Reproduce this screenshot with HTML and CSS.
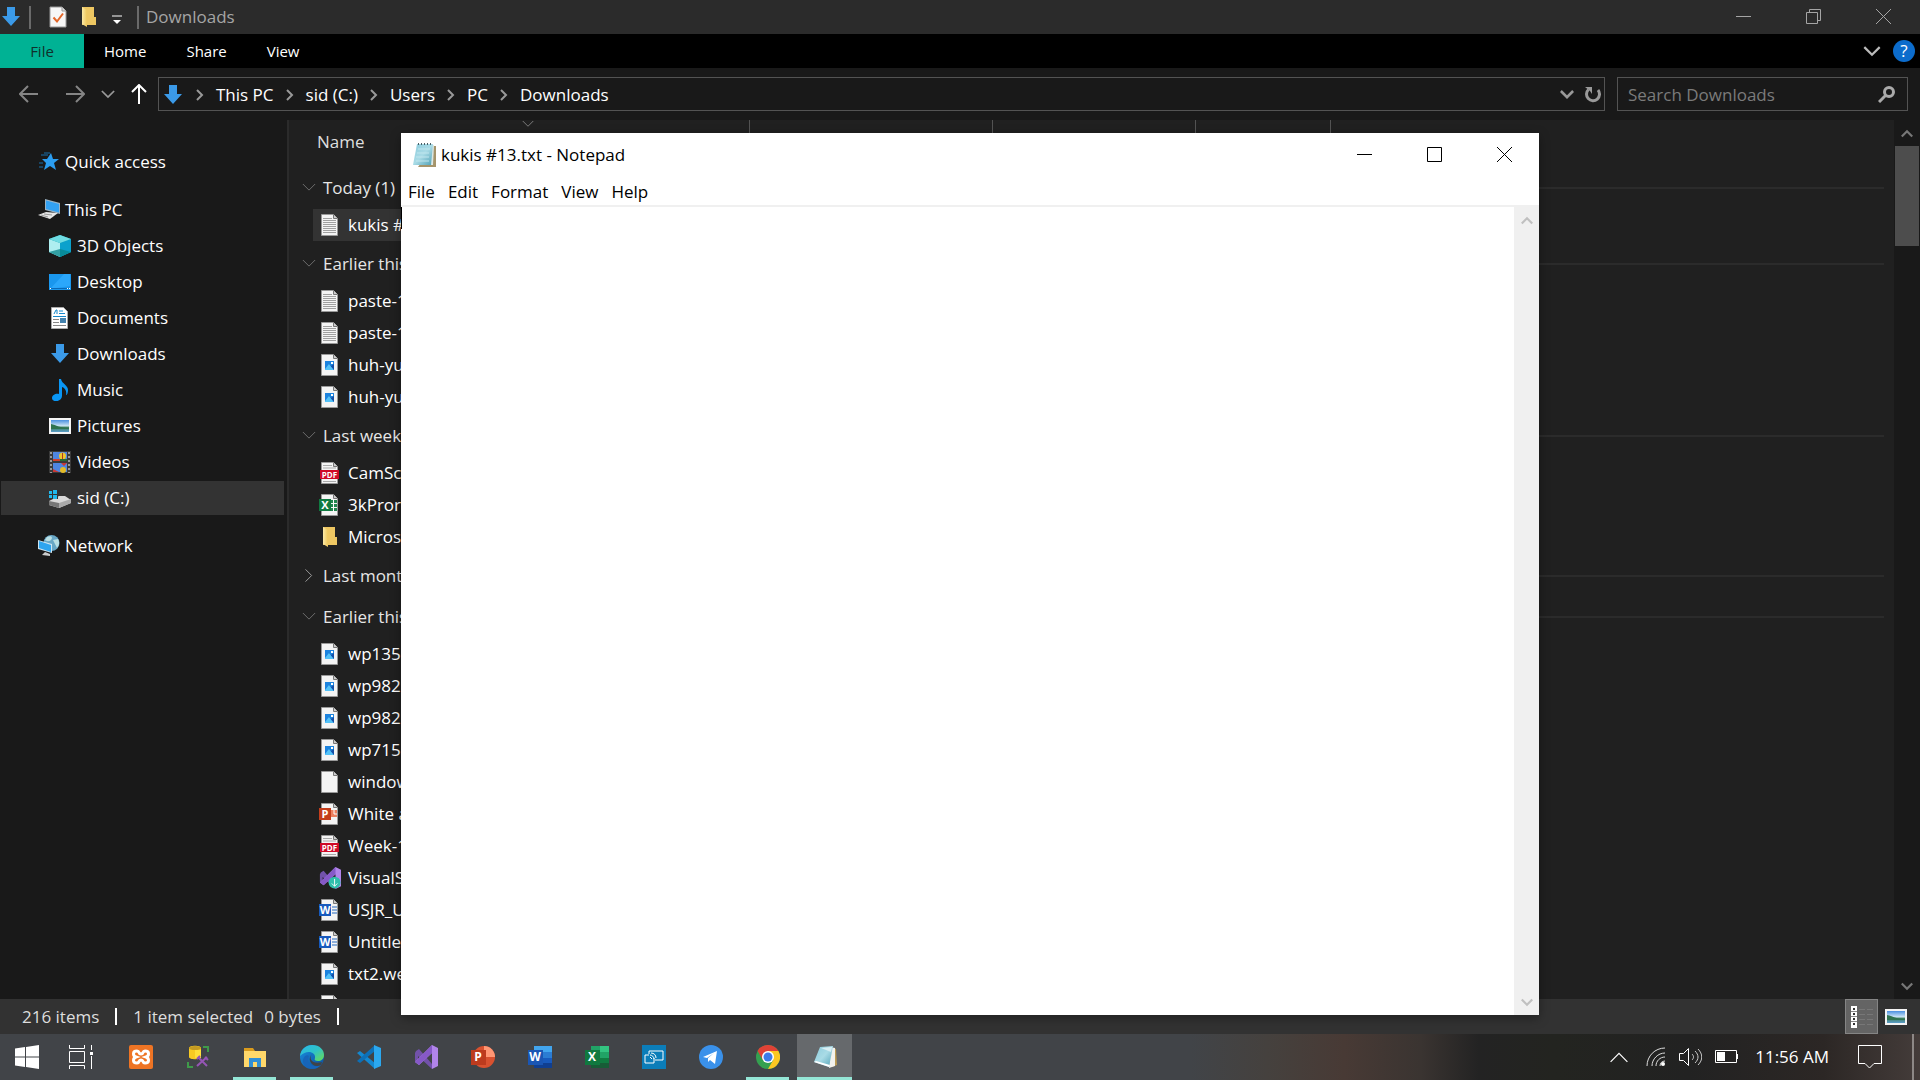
FILE: index.html
```html
<!DOCTYPE html>
<html lang="en">
<head>
<meta charset="utf-8">
<title>Downloads</title>
<link rel="stylesheet" href="styles.css">
</head>
<body>
<svg class="defs" aria-hidden="true">
  <defs>
    <linearGradient id="g-sky" x1="0" y1="0" x2="0" y2="1"><stop offset="0" stop-color="#4a90e0"/><stop offset=".5" stop-color="#cfe6f5"/><stop offset=".6" stop-color="#3c7d5a"/><stop offset="1" stop-color="#5c9ecb"/></linearGradient>
    <linearGradient id="g-pad" x1="0" y1="0" x2="1" y2="1"><stop offset="0" stop-color="#8ccbdc"/><stop offset=".5" stop-color="#a9dbe6"/><stop offset="1" stop-color="#4fa0b5"/></linearGradient>
    <linearGradient id="g-folder" x1="0" y1="0" x2="1" y2="0"><stop offset="0" stop-color="#fbe9a6"/><stop offset="1" stop-color="#eec75b"/></linearGradient>
    <linearGradient id="g-edge" x1="0" y1="0" x2="1" y2="1"><stop offset="0" stop-color="#2ab7e8"/><stop offset=".5" stop-color="#2fc2c8"/><stop offset="1" stop-color="#6cdd4e"/></linearGradient>
    <linearGradient id="g-edge2" x1="0" y1="0" x2="1" y2="1"><stop offset="0" stop-color="#1a8fe0"/><stop offset="1" stop-color="#0c4f9c"/></linearGradient>
  </defs>
  <symbol id="down" viewBox="0 0 22 22"><path d="M7 1h8v9h5l-9 10-9-10h5z" fill="#3b9ae8"/></symbol>
  <symbol id="check" viewBox="0 0 22 22"><path d="M3 1h12l4 4v16H3z" fill="#f7f7f7" stroke="#999"/><path d="M15 1v4h4" fill="#ddd" stroke="#999"/><path d="M6.500 11.500l3.500 4 6-8" fill="none" stroke="#e3672a" stroke-width="2"/></symbol>
  <symbol id="folder" viewBox="0 0 22 22"><path d="M4 1h12v10h2v8H4z" fill="#eec762"/><path d="M4 1l5 3v17l-5-3z" fill="url(#g-folder)"/></symbol>
  <symbol id="star" viewBox="0 0 22 22"><path d="M13 2l2 6h6l-5 4 2 7-6-4-6 4 2-7-4-4h5z" fill="#2b9df0"/><path d="M3 4h7M1 12h4M1 16h4M6 2h6" stroke="#1970ad"/></symbol>
  <symbol id="pc" viewBox="0 0 22 22"><path d="M7 0l15 4v11L7 11z" fill="#9cb3c4"/><path d="M8 1.500l13 3.500v8.500L8 10z" fill="#33a1f2"/><path d="M0 16l8-3 12 1-8 6z" fill="#e6e6e6"/><path d="M3 16l7 2M6 15l8 1" stroke="#999"/></symbol>
  <symbol id="cube" viewBox="0 0 22 22"><path d="M11 0l11 4v13l-11 5-11-5V4z" fill="#14a3ad"/><path d="M0 4l11 4v14L0 17z" fill="#aeeef0"/><path d="M11 8l11-4v13l-11 5z" fill="#0ba1cc"/><path d="M11 0l11 4-11 4L0 4z" fill="#6fdce3"/><path d="M11 14l11 3-11 5-11-5z" fill="#08848a" opacity=".75"/></symbol>
  <symbol id="desktop" viewBox="0 0 22 22"><path d="M0 3h22v16H0z" fill="#1a97ee"/><path d="M1 18L15 3h6v12z" fill="#2ba7fb"/><path d="M1 17.500h20" stroke="#0a68b5"/><path d="M1 17.500h1M18 17.500h1M20 17.500h1" stroke="#fff"/></symbol>
  <symbol id="docs" viewBox="0 0 22 22"><path d="M2.500.500h12l4 4v17h-16z" fill="#fff" stroke="#aaa"/><path d="M5 7l2-4h1v4M10 4h4M10 6.500h6M4 9.500h13" stroke="#1689cc" fill="none"/><path d="M4 12.500h6M4 15.500h6M4 18.500h13" stroke="#888"/><path d="M11 11h6v5h-6z" fill="#4382ae"/></symbol>
  <symbol id="music" viewBox="0 0 22 22"><path d="M10 0h2c1 5 7 6 7 11 0 3-1 5-2 5 1-4-1-7-4-8v9c0 6-10 7-10 2 0-3 4-5 7-4z" fill="#0996f5"/></symbol>
  <symbol id="pics" viewBox="0 0 22 22"><path d="M0 3h22v16H0z" fill="#f4f4f4"/><path d="M2 5h18v12H2z" fill="url(#g-sky)"/><path d="M2 9c5 1 9 4 18 4v1H2z" fill="#2f7350"/></symbol>
  <symbol id="video" viewBox="0 0 22 22"><path d="M0 0h22v22H0z" fill="#3a3a3a"/><path d="M2 1v21M20 1v21" stroke="#999" stroke-width="2" stroke-dasharray="2 2"/><path d="M4 1h14v9H4zM4 12h14v9H4z" fill="#4f86e0"/><circle cx="13.500" cy="5" r="3.500" fill="#ecc52e"/><path d="M4 8h6l8 2H4z" fill="#d43f2a"/><path d="M11 8h7v2h-7z" fill="#276b31"/><circle cx="14" cy="19" r="3" fill="#e3bb28"/><path d="M12 12h6l-3 3zM4 18l6 3H4z" fill="#cc3833"/><path d="M13 2h1v6h-1z" fill="#b13b1d"/></symbol>
  <symbol id="drive" viewBox="0 0 22 22"><path d="M0 14l10-5h6l6 4v3l-12 5L0 18z" fill="#d9d9d9"/><path d="M0 14l10 2v5L0 18z" fill="#777"/><path d="M10 16l12-4v4l-12 5z" fill="#aaa"/><path d="M0 3h9v9H0z" fill="#333"/><path d="M0 4h3v3H0zM4 3h4v4H4zM0 8h3v3H0zM4 8h4v4H4z" fill="#21b9ed"/></symbol>
  <symbol id="net" viewBox="0 0 22 22"><circle cx="13.500" cy="8" r="8" fill="#68a7c6"/><path d="M9 2c5-2 6 1 4 3s-5 1-6 0zM15 5l5-1c2 4 1 6-1 9z" fill="#b9dfe4"/><path d="M0 5l14 4v9L0 14z" fill="#cfe6f2"/><path d="M1 6l12 4v7L1 13z" fill="#2fa5ef"/><path d="M7 17l5 2v2l-8-1z" fill="#ccc"/></symbol>
  <symbol id="page" viewBox="0 0 22 22"><path d="M2.500.500h12l4 4v17h-16z" fill="#f4f4f4" stroke="#999"/><path d="M14.500.500v4h4" fill="#ccc" stroke="#777"/></symbol>
  <symbol id="text" viewBox="0 0 22 22"><use href="#page"/><path d="M4 4.500h9M4 6.500h13M4 8.500h13M4 10.500h13M4 12.500h13M4 14.500h13M4 16.500h13M4 18.500h13" stroke="#a0a0a0"/></symbol>
  <symbol id="image" viewBox="0 0 22 22"><use href="#page"/><path d="M6 7h9v9H6z" fill="#1c83de"/><path d="M6 15l4-5 5 6H6z" fill="#54c2f7"/><path d="M10 10l2 2 3-2v6z" fill="#164ea5"/><path d="M12 8h2v2h-2z" fill="#fff"/></symbol>
  <symbol id="pdf" viewBox="0 0 22 22"><use href="#page"/><path d="M4 3.500h9M4 6h13M4 19.500h13" stroke="#aaa"/><path d="M1 8h19v9H1z" fill="#cf0a27"/></symbol>
  <symbol id="xlsf" viewBox="0 0 22 22"><use href="#page"/><path d="M12 6h6v3h-6zM12 10h6v3h-6zM12 14h6v3h-6z" fill="#21854d"/><path d="M14.500 5v13" stroke="#fff"/><path d="M0 5h12v12H0z" fill="#107a41"/></symbol>
  <symbol id="pptf" viewBox="0 0 22 22"><use href="#page"/><path d="M12 7h6v7h-6z" fill="#ec805f"/><path d="M15 7v4h3" stroke="#fff" fill="none"/><path d="M0 5h12v12H0z" fill="#c43e1c"/></symbol>
  <symbol id="docf" viewBox="0 0 22 22"><use href="#page"/><path d="M13 8h5M13 11h5M13 14h5" stroke="#2468c0"/><path d="M0 5h12v12H0z" fill="#185abd"/></symbol>
  <symbol id="vs" viewBox="0 0 24 24"><path d="M2 6l3-2 13 15v5L4 11v7l-3-2V8z" fill="#7252aa"/><path d="M18 0l6 3v18l-6 3V8L5 20l-4-3z" fill="#b184ea"/><path d="M18 0v8L5 20l-4-3z" fill="#8659c8"/></symbol>
  <symbol id="vsdl" viewBox="0 0 24 24"><use href="#vs"/><circle cx="17" cy="17" r="6.500" fill="#30bfac"/><path d="M17 13v8M14 18l3 3 3-3" stroke="#fff" fill="none"/></symbol>
  <symbol id="notepad" viewBox="0 0 24 26"><path d="M21 4h3v21H6z" fill="#a5946b"/><path d="M5 3h17l-1 20H4z" fill="#dce8e4"/><path d="M5 2h16l-2 21H1z" fill="url(#g-pad)"/><path d="M6 7h12M5 11h12M4 15h13M4 19h13" stroke="#c0e6ee"/><path d="M6 2h15" stroke="#4a5f66" stroke-width="2" stroke-dasharray="1 2"/></symbol>
  <symbol id="notetask" viewBox="0 0 24 24"><path d="M20 3l3 1 1 16-5 2z" fill="#bb9b55"/><path d="M17 2l5 1v18l-6 2z" fill="#f2f2ee"/><path d="M7 2l13-1-4 21-15-5z" fill="url(#g-pad)"/><path d="M8 3l11-1-1 5z" fill="#d9eef3"/><path d="M1 17l15 5 1-2-14-4z" fill="#fff"/></symbol>
  <symbol id="chev" viewBox="0 0 16 10"><path d="M1 1l7 7 7-7" fill="none" stroke="currentColor" stroke-width="var(--w,1)"/></symbol>
  <symbol id="crumb" viewBox="0 0 8 12"><path d="M1 1l5 5-5 5" fill="none" stroke="#999" stroke-width="2"/></symbol>
  <symbol id="min" viewBox="0 0 15 15"><path d="M0 7.500h15" stroke="currentColor"/></symbol>
  <symbol id="close" viewBox="0 0 15 15"><path d="M0 0l15 15M15 0L0 15" stroke="currentColor"/></symbol>
  <symbol id="max" viewBox="0 0 15 15"><path d="M.500.500h14v14H.500z" fill="none" stroke="currentColor"/></symbol>
  <symbol id="restore" viewBox="0 0 15 15"><path d="M.500 3.500h11v11H.500zM3.500 3.500v-3h11v11h-3" fill="none" stroke="currentColor"/></symbol>
</svg>

<div class="desktop">
  <main class="explorer">
    <header class="titlebar">
      <svg class="i22"><use href="#down"/></svg>
      <span class="tsep"></span>
      <button class="bare" aria-label="Properties"><svg class="i22"><use href="#check"/></svg></button>
      <button class="bare" aria-label="New folder"><svg class="i22"><use href="#folder"/></svg></button>
      <button class="bare customize" aria-label="Customize toolbar"><svg width="10" height="10" viewBox="0 0 10 10"><path d="M0 1h10" stroke="#fff" stroke-width="1"/><path d="M1 5h8l-4 4z" fill="#fff"/></svg></button>
      <span class="tsep"></span>
      <h1 class="title">Downloads</h1>
      <div class="winbtns">
        <button class="bare" aria-label="Minimize"><svg><use href="#min"/></svg></button>
        <button class="bare" aria-label="Restore"><svg><use href="#restore"/></svg></button>
        <button class="bare" aria-label="Close"><svg><use href="#close"/></svg></button>
      </div>
    </header>

    <nav class="ribbon">
      <button class="bare tab file">File</button>
      <button class="bare tab">Home</button>
      <button class="bare tab">Share</button>
      <button class="bare tab">View</button>
      <button class="bare expand" aria-label="Expand ribbon"><svg class="w2" width="18" height="11"><use href="#chev"/></svg></button>
      <button class="bare help" aria-label="Help">?</button>
    </nav>

    <div class="toolbar">
      <div class="nav">
        <button class="bare" aria-label="Back"><svg width="20" height="20" viewBox="0 0 20 20"><path d="M19 10H1M9 2l-8 8 8 8" fill="none" stroke="#858585" stroke-width="2"/></svg></button>
        <button class="bare" aria-label="Forward"><svg width="20" height="20" viewBox="0 0 20 20"><path d="M1 10h18M11 2l8 8-8 8" fill="none" stroke="#858585" stroke-width="2"/></svg></button>
        <button class="bare" aria-label="Recent"><svg class="w2 grey" width="14" height="9"><use href="#chev"/></svg></button>
        <button class="bare" aria-label="Up"><svg width="16" height="20" viewBox="0 0 16 20"><path d="M8 20V1M1 8l7-7 7 7" fill="none" stroke="#fff" stroke-width="2"/></svg></button>
      </div>
      <div class="address">
        <svg class="i22"><use href="#down"/></svg>
        <svg class="crumb"><use href="#crumb"/></svg><a href="#">This PC</a>
        <svg class="crumb"><use href="#crumb"/></svg><a href="#">sid (C:)</a>
        <svg class="crumb"><use href="#crumb"/></svg><a href="#">Users</a>
        <svg class="crumb"><use href="#crumb"/></svg><a href="#">PC</a>
        <svg class="crumb"><use href="#crumb"/></svg><a href="#">Downloads</a>
        <button class="bare history" aria-label="Previous locations"><svg class="w3 grey" width="14" height="9"><use href="#chev"/></svg></button>
        <button class="bare" aria-label="Refresh"><svg width="17" height="17" viewBox="0 0 17 17"><path d="M3.500 3.500A6.500 6.500 0 1 0 13 4" fill="none" stroke="#999" stroke-width="3"/><path d="M0 1h7v7l-2-3z" fill="#999"/></svg></button>
      </div>
      <div class="search">
        <input type="search" placeholder="Search Downloads" aria-label="Search Downloads">
        <svg width="17" height="17" viewBox="0 0 17 17"><circle cx="11" cy="6" r="4.500" fill="none" stroke="#aaa" stroke-width="3"/><path d="M8 9l-7 7" stroke="#aaa" stroke-width="3"/></svg>
      </div>
    </div>

    <div class="body">
      <aside class="tree">
        <a href="#" class="root"><svg class="i22"><use href="#star"/></svg>Quick access</a>
        <a href="#" class="root gap"><svg class="i22"><use href="#pc"/></svg>This PC</a>
        <a href="#"><svg class="i22"><use href="#cube"/></svg>3D Objects</a>
        <a href="#"><svg class="i22"><use href="#desktop"/></svg>Desktop</a>
        <a href="#"><svg class="i22"><use href="#docs"/></svg>Documents</a>
        <a href="#"><svg class="i22"><use href="#down"/></svg>Downloads</a>
        <a href="#"><svg class="i22"><use href="#music"/></svg>Music</a>
        <a href="#"><svg class="i22"><use href="#pics"/></svg>Pictures</a>
        <a href="#"><svg class="i22"><use href="#video"/></svg>Videos</a>
        <a href="#" class="current"><svg class="i22"><use href="#drive"/></svg>sid (C:)</a>
        <a href="#" class="root gap"><svg class="i22"><use href="#net"/></svg>Network</a>
      </aside>
      <section class="files">
        <div class="cols">
          <button class="bare col">Name<svg class="sort" width="12" height="8"><use href="#chev"/></svg></button>
          <span class="col"></span><span class="col"></span><span class="col"></span>
        </div>
        <h2 class="group"><svg><use href="#chev"/></svg>Today (1)</h2>
        <ul>
          <li class="selected"><svg class="i22"><use href="#text"/></svg>kukis #</li>
        </ul>
        <h2 class="group"><svg><use href="#chev"/></svg>Earlier this</h2>
        <ul>
          <li><svg class="i22"><use href="#text"/></svg>paste-1</li>
          <li><svg class="i22"><use href="#text"/></svg>paste-1</li>
          <li><svg class="i22"><use href="#image"/></svg>huh-yu</li>
          <li><svg class="i22"><use href="#image"/></svg>huh-yu</li>
        </ul>
        <h2 class="group"><svg><use href="#chev"/></svg>Last week</h2>
        <ul>
          <li><svg class="i22" viewBox="0 0 22 22"><use href="#pdf"/><text x="10.500" y="15.500" class="glyph pdf-label">PDF</text></svg>CamSc</li>
          <li><svg class="i22" viewBox="0 0 22 22"><use href="#xlsf"/><text x="6" y="15" class="glyph">X</text></svg>3kPror</li>
          <li><svg class="i22"><use href="#folder"/></svg>Micros</li>
        </ul>
        <h2 class="group closed"><svg><use href="#chev"/></svg>Last mont</h2>
        <h2 class="group"><svg><use href="#chev"/></svg>Earlier this</h2>
        <ul>
          <li><svg class="i22"><use href="#image"/></svg>wp135</li>
          <li><svg class="i22"><use href="#image"/></svg>wp982</li>
          <li><svg class="i22"><use href="#image"/></svg>wp982</li>
          <li><svg class="i22"><use href="#image"/></svg>wp715</li>
          <li><svg class="i22"><use href="#page"/></svg>window</li>
          <li><svg class="i22" viewBox="0 0 22 22"><use href="#pptf"/><text x="6" y="15" class="glyph">P</text></svg>White a</li>
          <li><svg class="i22" viewBox="0 0 22 22"><use href="#pdf"/><text x="10.500" y="15.500" class="glyph pdf-label">PDF</text></svg>Week-1</li>
          <li><svg class="i22"><use href="#vsdl"/></svg>VisualS</li>
          <li><svg class="i22" viewBox="0 0 22 22"><use href="#docf"/><text x="6" y="15" class="glyph">W</text></svg>USJR_U</li>
          <li><svg class="i22" viewBox="0 0 22 22"><use href="#docf"/><text x="6" y="15" class="glyph">W</text></svg>Untitle</li>
          <li><svg class="i22"><use href="#image"/></svg>txt2.we</li>
          <li><svg class="i22"><use href="#page"/></svg></li>
        </ul>
      </section>
      <div class="scroll dark">
        <button class="bare" aria-label="Scroll up"><svg class="flip w3" width="12" height="9"><use href="#chev"/></svg></button>
        <span class="thumb"></span>
        <button class="bare end" aria-label="Scroll down"><svg class="w3" width="12" height="9"><use href="#chev"/></svg></button>
      </div>
    </div>

    <footer class="status">
      <span>216 items</span><i></i><span>1 item selected</span><span class="size">0 bytes</span><i></i>
      <button class="bare view on" aria-label="Details view"><svg width="22" height="22" viewBox="0 0 22 22"><path d="M0 0h6v22H0z" fill="#fff"/><path d="M2 3h2M2 8h2M2 13h2M2 18h2" stroke="#333" stroke-width="2"/><path d="M0 5.500h6M0 10.500h6M0 15.500h6" stroke="#888"/><path d="M8 3.500h6M16 3.500h6M8 8.500h6M16 8.500h6M8 13.500h6M16 13.500h6M8 18.500h6M16 18.500h6" stroke="#777"/></svg></button>
      <button class="bare view" aria-label="Thumbnail view"><svg class="i22"><use href="#pics"/></svg></button>
    </footer>
  </main>

  <section class="notepad">
    <header class="np-title">
      <svg width="24" height="26"><use href="#notepad"/></svg>
      <h2>kukis #13.txt - Notepad</h2>
      <div class="winbtns">
        <button class="bare" aria-label="Minimize"><svg><use href="#min"/></svg></button>
        <button class="bare" aria-label="Maximize"><svg><use href="#max"/></svg></button>
        <button class="bare" aria-label="Close"><svg><use href="#close"/></svg></button>
      </div>
    </header>
    <nav class="np-menu">
      <button class="bare">File</button><button class="bare">Edit</button><button class="bare">Format</button><button class="bare">View</button><button class="bare">Help</button>
    </nav>
    <div class="np-body">
      <span class="caret"></span>
      <textarea aria-label="Document text"></textarea>
      <div class="scroll light">
        <button class="bare" aria-label="Scroll up"><svg class="flip w3" width="12" height="9"><use href="#chev"/></svg></button>
        <button class="bare end" aria-label="Scroll down"><svg class="w3" width="12" height="9"><use href="#chev"/></svg></button>
      </div>
    </div>
  </section>

  <nav class="taskbar">
    <button class="bare sys" aria-label="Start"><svg viewBox="0 0 24 24"><path d="M0 3.500l10-1.500v9.500H0zM11 2l13-2v11.500H11zM0 12.500h10V22L0 20.500zM11 12.500h13V24l-13-2z" fill="#fff"/></svg></button>
    <button class="bare sys" aria-label="Task view"><svg viewBox="0 0 24 24"><path d="M.500 0v3.500h15V0M.500 6.500h15v11H.500zM.500 24v-3.500h15V24M22.500 0v5M22.500 11v13" fill="none" stroke="#fff"/><path d="M21 7h3v3h-3z" fill="#fff"/></svg></button>
    <div class="apps">
      <button class="bare" aria-label="XAMPP"><svg viewBox="0 0 24 24"><rect width="24" height="24" rx="2" fill="#ee7424"/><path d="M8 6c-5 0-4 5-1 6-3 1-4 6 1 6 3 0 1-3 4-3s1 3 4 3c5 0 4-5 1-6 3-1 4-6-1-6-3 0-1 3-4 3s-1-3-4-3z" fill="none" stroke="#fff" stroke-width="3"/></svg></button>
      <button class="bare" aria-label="SQL Server"><svg viewBox="0 0 24 24"><path d="M3 3c0-3 12-3 12 0v9c0 3-12 3-12 0z" fill="#f8ca22"/><ellipse cx="9" cy="3" rx="6" ry="2" fill="#c39a23"/><path d="M9 5h6v8H9z" fill="#ffdf38"/><path d="M17 2h5v5M2 17v5h5" fill="none" stroke="#3f9a4a" stroke-width="2"/><path d="M12 12l9 9M21 12l-10 9M11 14l3-3M19 12l3 3" stroke="#9555b5" stroke-width="2"/></svg></button>
      <button class="bare open" aria-label="File Explorer"><svg viewBox="0 0 24 24"><path d="M1 3h9l2 3H1z" fill="#d99b1d"/><path d="M1 6h22v16H1z" fill="#ffd86a"/><path d="M6 13h12v9h-4v-5h-4v5H6z" fill="#318fd5"/></svg></button>
      <button class="bare open" aria-label="Edge"><svg viewBox="0 0 24 24"><circle cx="12" cy="12" r="12" fill="url(#g-edge2)"/><path d="M0 11C1 4 6 0 12 0c8 0 12 5 12 10 0 4-3 6-6 6s-4-1-3-3c1-6-8-9-15-2z" fill="url(#g-edge)"/><path d="M9 11c-3 7 4 13 12 9-6 7-19 4-18-5 1-4 4-6 6-4z" fill="#1765b9"/><path d="M12 9c-4 5 1 11 10 8l-1 3c-8 4-15-5-9-11z" fill="#404347"/></svg></button>
      <button class="bare" aria-label="VS Code"><svg viewBox="0 0 24 24"><path d="M0 8l3-2 15 12v6z" fill="#1488d0"/><path d="M0 16l3 2L18 6V0z" fill="#0c70b8"/><path d="M17 0l7 3v18l-7 3z" fill="#2ba8ef"/></svg></button>
      <button class="bare" aria-label="Visual Studio"><svg><use href="#vs"/></svg></button>
      <button class="bare" aria-label="PowerPoint"><svg viewBox="0 0 24 24"><circle cx="13" cy="12" r="11" fill="#d8512f"/><path d="M13 1a11 11 0 0 1 11 11H13z" fill="#ff9774"/><path d="M0 5h15v15H0z" fill="#bd3b1e"/><text x="7" y="16" class="glyph big">P</text></svg></button>
      <button class="bare" aria-label="Word"><svg viewBox="0 0 24 24"><path d="M6 1h18v6H6z" fill="#42a5ee"/><path d="M6 7h18v6H6z" fill="#2b7cd3"/><path d="M6 13h18v5H6z" fill="#185abd"/><path d="M6 18h18v5H6z" fill="#103f91"/><path d="M0 5h15v15H0z" fill="#1a56b4"/><text x="7" y="16" class="glyph big">W</text></svg></button>
      <button class="bare" aria-label="Excel"><svg viewBox="0 0 24 24"><path d="M6 1h18v22H6z" fill="#21a366"/><path d="M15 1h9v6h-9z" fill="#33c481"/><path d="M6 7h9v6H6z" fill="#107c41"/><path d="M6 13h18v10H6z" fill="#185c37"/><path d="M15 13h9v5h-9z" fill="#107c41"/><path d="M0 5h15v15H0z" fill="#10793f"/><text x="7" y="16" class="glyph big">X</text></svg></button>
      <button class="bare" aria-label="Connect"><svg viewBox="0 0 24 24"><path d="M0 0h24v24H0z" fill="#0b7db9"/><path d="M7 9V6h14v9h-8M3 10h4M12 13v5H3v-8" fill="none" stroke="#fff"/><path d="M8 10c2 0 4 2 4 4M9 8c3 0 5 2 5 5M8 12l2 2" fill="none" stroke="#fff"/></svg></button>
      <button class="bare" aria-label="Telegram"><svg viewBox="0 0 24 24"><circle cx="12" cy="12" r="12" fill="#3a91ea"/><path d="M4 12l14-6-2 13-5-4-2 2v-4l6-5-7 5z" fill="#fff"/></svg></button>
      <button class="bare open" aria-label="Chrome"><svg viewBox="0 0 24 24"><circle cx="12" cy="12" r="12" fill="#34a050"/><path d="M1.600 6A12 12 0 0 1 22.400 6H12L6.800 15z" fill="#e04236"/><path d="M22.400 6A12 12 0 0 1 12 24l5.200-9L12 6z" fill="#fbc722"/><circle cx="12" cy="12" r="6" fill="#fff"/><circle cx="12" cy="12" r="4.500" fill="#3d7be8"/></svg></button>
      <button class="bare open active" aria-label="Notepad"><svg><use href="#notetask"/></svg></button>
    </div>
    <div class="tray">
      <button class="bare" aria-label="Hidden icons"><svg class="flip white" width="20" height="12"><use href="#chev"/></svg></button>
      <button class="bare wifi" aria-label="Network"><svg width="20" height="20" viewBox="0 0 20 20"><path d="M1 19C1 9 9 1 19 1M6 19C6 12 12 6 19 6M10 19c0-5 4-9 9-9M14 19c0-3 2-5 5-5" fill="none" stroke="#ddd"/><circle cx="17" cy="17" r="2" fill="#fff"/></svg></button>
      <button class="bare volume" aria-label="Volume"><svg width="23" height="20" viewBox="0 0 23 20"><path d="M.500 6.500h4l5-5v17l-5-5h-4z" fill="none" stroke="#fff"/><path d="M13 7c2 2 2 4 0 6M16 4c4 4 4 8 0 12M19 2c5 5 5 11 0 16" fill="none" stroke="#ccc"/></svg></button>
      <button class="bare battery" aria-label="Battery"><svg width="23" height="14" viewBox="0 0 23 14"><path d="M.500.500h21v12H.500z" fill="none" stroke="#fff"/><path d="M2 2h8v9H2z" fill="#fff"/><path d="M22 4h1v5h-1z" fill="#fff"/></svg></button>
      <time>11:56 AM</time>
      <button class="bare notes" aria-label="Notifications"><svg width="24" height="24" viewBox="0 0 24 24"><path d="M.500.500h23v18H16l-4.500 4.500-4.500-4.500H.500z" fill="none" stroke="#fff"/></svg></button>
      <button class="bare peek" aria-label="Show desktop"></button>
    </div>
  </nav>
</div>
</body>
</html>
```
FILE: styles.css
```css
* { box-sizing: border-box; }
body {
  margin: 0;
  background: #191919;
  color: #fff;
  font: 17px/24px "Open Sans", "Noto Sans", sans-serif;
}
h1, h2, ul { margin: 0; padding: 0; font: inherit; list-style: none; }
a { color: inherit; text-decoration: none; }
svg { display: block; flex: none; }
.defs { position: absolute; width: 0; height: 0; }
.bare {
  display: flex;
  align-items: center;
  justify-content: center;
  padding: 0;
  border: 0;
  background: none;
  color: inherit;
  font: inherit;
}
.i22 { width: 22px; height: 22px; }
.w2 { --w: 2; }
.w3 { --w: 3; }
.grey { color: #999; }
.white { color: #fff; }
.flip { transform: rotate(180deg); }
.glyph { fill: #fff; font: bold 11px "Open Sans", sans-serif; text-anchor: middle; }
.pdf-label { font-size: 8px; }
.big { font-size: 12px; }

.desktop { position: relative; display: flex; flex-direction: column; height: 100vh; overflow: hidden; }
.explorer { display: flex; flex: 1; flex-direction: column; min-height: 0; }

/* Explorer title bar */
.titlebar { display: flex; align-items: center; height: 34px; background: #2b2b2b; color: #a5a5a5; }
.tsep { width: 2px; height: 23px; margin-left: 7px; border: 1px solid #6a6a6a; }
.titlebar > .bare { margin-left: 9px; }
.titlebar .tsep + .bare { margin-left: 16px; }
.titlebar > .customize { margin: 5px 8px 0 12px; }
.title { margin-left: 7px; }
.winbtns { display: flex; align-self: stretch; margin-left: auto; }
.winbtns .bare { width: 70px; padding-bottom: 2px; }
.winbtns svg { width: 15px; height: 15px; }
.titlebar .winbtns { padding-right: 2px; }

/* Ribbon */
.ribbon { display: flex; align-items: stretch; height: 34px; padding-right: 5px; background: #000; font-size: 15px; }
.tab { padding: 0 20px; }
.tab.file { width: 84px; background: #00b294; color: #10302b; }
.expand { margin-left: auto; margin-right: 12px; color: #bbb; }
.help { align-self: center; width: 22px; height: 22px; border-radius: 50%; background: #0c6ccc; font-size: 17px; }

/* Address row */
.toolbar { display: flex; align-items: center; height: 52px; padding-right: 12px; }
.nav { display: flex; width: 158px; padding-left: 19px; }
.nav .bare { margin-right: 16px; }
.nav .bare:first-child { margin-right: 26px; }
.nav .bare:last-child { margin-right: 0; }
.address, .search { display: flex; align-items: center; height: 34px; border: 1px solid #535353; }
.address { flex: 1; padding: 1px 2px 0 3px; }
.crumb { width: 8px; height: 12px; margin: 0 12px; }
.history { margin-left: auto; margin-right: 11px; }
.search { width: 291px; margin-left: 12px; padding: 1px 12px 0 10px; }
.search input { flex: 1; min-width: 0; padding: 0; border: 0; outline: 0; background: none; color: #fff; font: inherit; }
.search input::placeholder { color: #7b7b7b; opacity: 1; }

/* Navigation tree */
.body { display: flex; flex: 1; min-height: 0; }
.tree { width: 289px; padding: 25px 3px 0 1px; border-right: 2px solid #2b2b2b; }
.tree a { display: flex; align-items: center; gap: 6px; height: 34px; margin: 0 0 2px; padding-left: 48px; }
.tree .root { gap: 5px; padding-left: 37px; }
.tree .root.gap { margin-top: 14px; }
.tree .current { background: #333; }

/* File list */
.files { flex: 1; min-width: 0; overflow: hidden; padding: 0 10px 0 13px; background: #202020; }
.cols { display: flex; height: 45px; }
.cols .col { position: relative; width: 203px; border-right: 1px solid #535353; }
.cols .bare { justify-content: flex-start; width: 448px; padding-left: 15px; padding-bottom: 2px; color: #dedede; }
.cols .col:nth-child(2) { width: 243px; }
.cols .col:nth-child(4) { width: 135px; }
.sort { position: absolute; top: 0; left: 220px; color: #999; }
.group { display: flex; align-items: center; height: 44px; padding-top: 1px; color: #e6e6e6; }
.group svg { width: 14px; height: 9px; margin-right: 7px; color: #777; }
.group::after { content: ""; flex: 1; height: 2px; margin-left: 12px; background: #2b2b2b; }
.group.closed { height: 41px; padding-top: 4px; }
.group.closed svg { transform: rotate(-90deg); color: #aaa; }
.files li { display: flex; align-items: center; gap: 7px; height: 32px; margin-left: 11px; padding-left: 6px; }
.files li.selected { width: 1040px; background: #333; }

/* Scroll bars */
.scroll { display: flex; flex-direction: column; }
.scroll .bare { height: 26px; }
.scroll .end { margin-top: auto; }
.scroll.dark { width: 26px; padding: 0 1px; color: #777; }
.scroll.light { width: 25px; background: #f0f0f0; color: #c0c0c0; }
.thumb { height: 100px; background: #4d4d4d; }

/* Status bar */
.status { display: flex; align-items: center; height: 35px; padding: 0 8px 0 22px; background: #323232; color: #dedede; }
.status i { width: 2px; height: 17px; margin: 0 16px; background: #fff; }
.status .size { margin-left: 11px; }
.view { width: 33px; height: 35px; }
.view.on { margin-left: auto; border: 1px solid #858585; background: #646464; }
.view + .view { margin-left: 1px; }

/* Notepad window */
.notepad {
  position: absolute;
  top: 133px;
  left: 401px;
  display: flex;
  flex-direction: column;
  width: 1138px;
  height: 882px;
  background: #fff;
  color: #000;
  box-shadow: 0 3px 10px rgba(0, 0, 0, .35);
}
.np-title { display: flex; align-items: center; gap: 5px; height: 44px; padding-left: 11px; }
.np-menu { display: flex; align-items: center; gap: 13px; height: 30px; padding: 2px 7px 0; border-bottom: 2px solid #f0f0f0; }
.np-body { display: flex; flex: 1; min-height: 0; }
.np-body textarea { flex: 1; padding: 0; border: 0; outline: 0; resize: none; background: #fff; color: #000; font: inherit; }
.caret { width: 1px; height: 22px; background: #000; }

/* Taskbar */
.taskbar {
  display: flex;
  height: 46px;
  background: linear-gradient(90deg, #414448 0%, #414448 62%, #45413e 66%, #483a35 70%, #3a3431 74%, #232323 77%, #232420 81%, #222 88%, #2c2725 95%, #443c3a 100%);
}
.sys { width: 54px; }
.taskbar .sys svg, .apps svg { width: 24px; height: 24px; }
.apps { display: flex; gap: 2px; margin-left: 5px; }
.apps .bare { position: relative; width: 55px; }
.apps .open::after { content: ""; position: absolute; right: 6px; bottom: 0; left: 6px; height: 3px; background: #94e6d6; }
.apps .active { background: #66696c; }
.apps .active::after { right: 0; left: 0; }
.tray { display: flex; align-items: center; margin-left: auto; }
.wifi { margin-left: 17px; }
.volume { margin-left: 13px; }
.battery { margin-left: 13px; }
.tray time { margin: 0 29px 0 17px; }
.peek { width: 8px; height: 46px; margin-left: 30px; border-left: 2px solid #8d8886; }
```
